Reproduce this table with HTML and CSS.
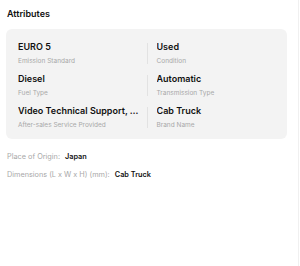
FILE: index.html
```html
<!DOCTYPE html>
<html>
<head>
    <title>Attributes</title>
    <meta charset="UTF-8">
    <link rel="stylesheet" href="styles.css">
</head>
<body>
    <div class="panel">
        <h2 class="panel-title">Attributes</h2>

        <!-- Key attributes card -->
        <div class="attr-card">
            <div class="attr-item">
                <div class="attr-value">EURO 5</div>
                <div class="attr-label">Emission Standard</div>
            </div>
            <div class="attr-item attr-right">
                <div class="attr-value">Used</div>
                <div class="attr-label">Condition</div>
            </div>
            <div class="attr-item">
                <div class="attr-value">Diesel</div>
                <div class="attr-label">Fuel Type</div>
            </div>
            <div class="attr-item attr-right">
                <div class="attr-value">Automatic</div>
                <div class="attr-label">Transmission Type</div>
            </div>
            <div class="attr-item">
                <div class="attr-value">Video Technical Support, Online Support</div>
                <div class="attr-label">After-sales Service Provided</div>
            </div>
            <div class="attr-item attr-right">
                <div class="attr-value">Cab Truck</div>
                <div class="attr-label">Brand Name</div>
            </div>
        </div>

        <!-- Other attributes -->
        <div class="other-list">
            <div class="other-row">
                <span class="other-label">Place of Origin:</span>
                <span class="other-value">Japan</span>
            </div>
            <div class="other-row">
                <span class="other-label">Dimensions (L x W x H) (mm):</span>
                <span class="other-value">Cab Truck</span>
            </div>
        </div>
    </div>
</body>
</html>
```

FILE: styles.css
```css
body {
    margin: 0;
    font-family: Inter, "Noto Sans", Arial, sans-serif;
    color: #111;
    background: #fff;
}
.panel {
    width: 299px;
    height: 266px;
    box-sizing: border-box;
    padding: 7px 11px 0 6px;
    border-right: 1px solid #f0f0f0;
}
.panel-title {
    margin: 0 0 9px 1px;
    font-size: 9px;
    line-height: 13px;
    font-weight: 600;
}
.attr-card {
    display: grid;
    grid-template-columns: 1fr 1fr;
    row-gap: 5px;
    padding: 11px 12px 8px 12px;
    background: #f3f3f3;
    border-radius: 6px;
}
.attr-item {
    min-width: 0;
    padding-right: 5px;
}
.attr-right {
    padding-left: 10px;
    background: linear-gradient(#e2e2e2, #e2e2e2) left center / 1px 21px no-repeat;
}
.attr-value {
    font-size: 9px;
    line-height: 14px;
    font-weight: 600;
    white-space: nowrap;
    overflow: hidden;
    text-overflow: ellipsis;
}
.attr-label {
    margin-top: 1px;
    font-size: 6.5px;
    line-height: 12px;
    color: #a8a8a8;
}
.other-list {
    margin-top: 11px;
    padding-left: 1px;
}
.other-row {
    font-size: 7.3px;
    line-height: 14px;
    margin-bottom: 4px;
}
.other-label {
    color: #a8a8a8;
    margin-right: 3px;
}
.other-value {
    font-weight: 600;
}
```
